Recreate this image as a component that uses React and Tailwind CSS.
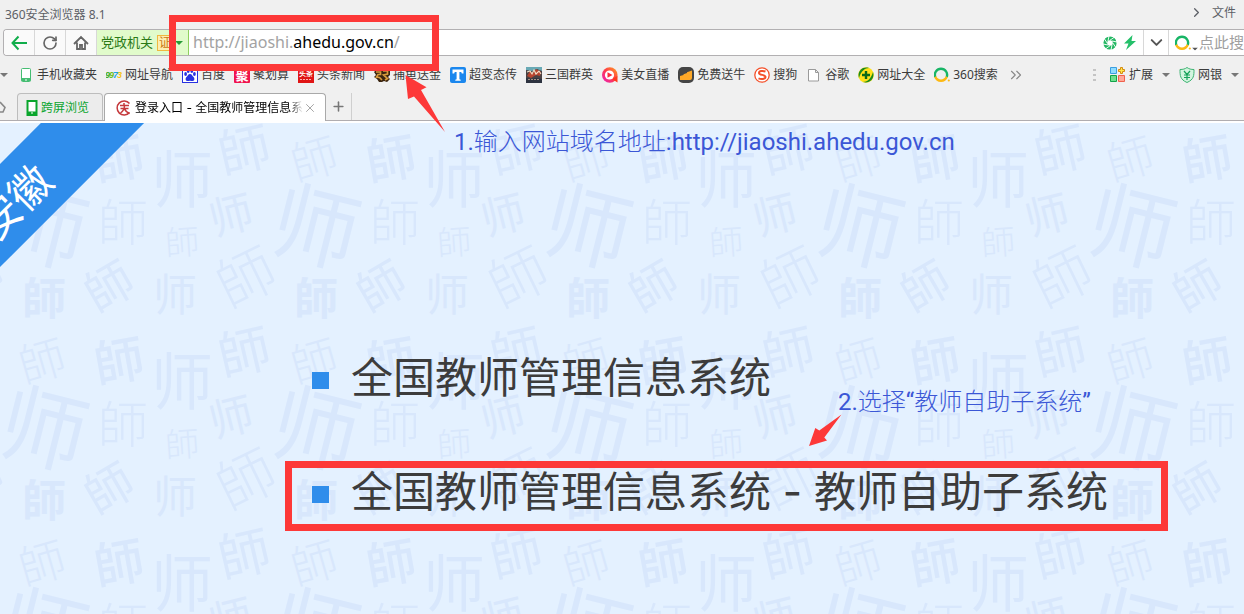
import { useState } from 'react'
import { ArrowLeft, ChevronDown, ChevronRight, ChevronsRight, Plus, RotateCw, X } from 'lucide-react'

const CJK = "font-['Noto_Sans','Noto_Sans_CJK_SC',sans-serif]"

const GLYPHS = [
  { c: '師', x: 42, y: 36, s: 46, r: -16, w: 300 },
  { c: '師', x: 119, y: 36, s: 50, r: -10, w: 500 },
  { c: '师', x: 182, y: 57, s: 62, r: 0, w: 400 },
  { c: '師', x: 244, y: 27, s: 52, r: -13, w: 400 },
  { c: '师', x: 44, y: 104, s: 86, r: 14, w: 400 },
  { c: '師', x: 123, y: 99, s: 50, r: 0, w: 300 },
  { c: '師', x: 182, y: 119, s: 34, r: -4, w: 300 },
  { c: '师', x: 231, y: 92, s: 44, r: -14, w: 400 },
  { c: '師', x: 44, y: 176, s: 44, r: 0, w: 700 },
  { c: '師', x: 109, y: 163, s: 48, r: -30, w: 400 },
  { c: '师', x: 175, y: 172, s: 44, r: 0, w: 400 },
  { c: '師', x: 246, y: 154, s: 58, r: -26, w: 300 },
]

function Backdrop() {
  return (
    <svg aria-hidden="true" className="absolute inset-0 h-full w-full">
      <defs>
        <g id="tile" fill="#d8e7fc" textAnchor="middle" fontFamily="'Noto Sans CJK TC', 'Noto Sans CJK SC', sans-serif">
          {GLYPHS.map((g, i) => (
            <text key={i} fontSize={g.s} fontWeight={g.w} transform={`translate(${g.x} ${g.y}) rotate(${g.r})`} y={g.s * 0.37}>
              {g.c}
            </text>
          ))}
        </g>
      </defs>
      {Array.from({ length: 36 }).map((_, i) => (
        <use key={i} href="#tile" x={((i % 9) - 1) * 272} y={Math.floor(i / 9) * 202} />
      ))}
    </svg>
  )
}

function Caret({ className = '' }) {
  return (
    <svg viewBox="0 0 8 4" className={`h-1 w-2 shrink-0 ${className}`}>
      <path d="M0 0h8L4 4z" fill="currentColor" />
    </svg>
  )
}

function Icon({ children }) {
  return (
    <svg viewBox="0 0 16 16" className="size-4 shrink-0">
      {children}
    </svg>
  )
}

function SearchRing() {
  return (
    <Icon>
      <path d="M1.3 10A6.1 6.1 0 1 1 12.700 10" fill="none" stroke="#18b566" strokeWidth="2.400" />
      <path d="M1.300 9.800a6.100 6.100 0 0 0 11.400 0" fill="none" stroke="#fdb913" strokeWidth="2.400" />
      <circle cx="14.800" cy="13.500" r="1.100" fill="#fdb913" />
    </Icon>
  )
}

const BOOKMARKS = [
  {
    label: '手机收藏夹',
    icon: (
      <Icon>
        <rect x="3.500" y="1.500" width="9" height="13" rx="1" fill="#fff" stroke="#45bd72" />
        <path d="M3.500 12.500h9" stroke="#45bd72" strokeWidth="3" />
        <path d="M7 13h2" stroke="#fff" />
      </Icon>
    ),
  },
  {
    label: '网址导航',
    icon: (
      <Icon>
        <g fontFamily="Liberation Sans" fontSize="9" fontWeight="700" fontStyle="italic">
          <text x="-1" y="11" fill="#3fae2a">9</text>
          <text x="3" y="11" fill="#6cc01c">9</text>
          <text x="7" y="11" fill="#1ba0e8">7</text>
          <text x="11" y="11" fill="#f5c518">3</text>
        </g>
      </Icon>
    ),
  },
  {
    label: '百度',
    icon: (
      <Icon>
        <rect x="0.500" y="0.500" width="15" height="15" fill="#fff" stroke="#2932e1" />
        <g fill="#2932e1">
          <ellipse cx="3.600" cy="7" rx="1.400" ry="1.900" />
          <ellipse cx="6.200" cy="4" rx="1.400" ry="2" />
          <ellipse cx="9.800" cy="4" rx="1.400" ry="2" />
          <ellipse cx="12.400" cy="7" rx="1.400" ry="1.900" />
          <path d="M8 7c2 0 2 1.500 3.500 3s1 4-1 4c-1 0-1.500-.3-2.500-.3s-1.500.3-2.500.3c-2 0-2.500-2.500-1-4S6 7 8 7z" />
        </g>
      </Icon>
    ),
  },
  {
    label: '聚划算',
    icon: (
      <Icon>
        <rect width="16" height="16" rx="1" fill="#f0134d" />
        <text x="8" y="12.500" fontSize="13" fontWeight="700" textAnchor="middle" fill="#fff">聚</text>
      </Icon>
    ),
  },
  {
    label: '头条新闻',
    icon: (
      <Icon>
        <rect width="16" height="16" fill="#e01515" />
        <text x="8" y="9" fontSize="7" fontWeight="700" textAnchor="middle" fill="#fff">头条</text>
        <path d="M2 12.500h12" stroke="#ffb0b0" strokeDasharray="2 1" />
      </Icon>
    ),
  },
  {
    label: '捕鱼送金',
    icon: (
      <Icon>
        <path d="M0 5l3-3h4l2 1 3-2 4 3v4l-2 2 2 2-3 3-3-1-2 1H5L3 12 0 10l2-2z" fill="#3a2410" />
        <path d="M2 5h4.500v2.500H4L2.500 10l3 .5L8 13M9 4h4.500v3L9.500 8l4 3.500L11 13" fill="none" stroke="#d79a3c" strokeWidth="1.700" />
      </Icon>
    ),
  },
  {
    label: '超变态传',
    icon: (
      <Icon>
        <rect width="16" height="16" rx="2" fill="#1b87ee" />
        <path d="M2.500 2.500h11v4h-1.700l-.6-1.600H9.400v7.300l1.300.5v1H5.300v-1l1.300-.5V4.900H4.800l-.6 1.600H2.500z" fill="#fff" />
      </Icon>
    ),
  },
  {
    label: '三国群英',
    icon: (
      <Icon>
        <rect width="16" height="16" fill="#4a4244" />
        <path d="M0 0h16v4L11 2 6 4 0 3z" fill="#69a9b5" />
        <path d="M1 9l3-5 3 2 3-4 5 3-1 4-4-1-5 3z" fill="#b8452f" />
        <path d="M1 5l3-1 2 3 2-4 2 4 3-3 2 3" fill="none" stroke="#f2dfc6" strokeWidth="1.100" />
        <path d="M0 11l5 1 5-1 6 1v4H0z" fill="#2d3340" />
        <path d="M2 12.500h12" stroke="#a89080" strokeDasharray="2 1" />
      </Icon>
    ),
  },
  {
    label: '美女直播',
    icon: (
      <Icon>
        <defs>
          <linearGradient id="live" x1="0" y1="1" x2="1" y2="0">
            <stop offset="0" stopColor="#e81ec4" />
            <stop offset="0.500" stopColor="#ff3a4a" />
            <stop offset="1" stopColor="#ffa51e" />
          </linearGradient>
        </defs>
        <circle cx="7.800" cy="8" r="7.800" fill="url(#live)" />
        <path d="M10 12l5.500 3.500V9z" fill="#ff3a1e" />
        <circle cx="7.500" cy="8" r="4.600" fill="#fff" />
        <path d="M5.500 5.200l5 2.800-5 2.800z" fill="#fb2c3c" />
      </Icon>
    ),
  },
  {
    label: '免费送牛',
    icon: (
      <Icon>
        <rect width="16" height="16" rx="5" fill="#454545" />
        <path d="M2 9l3.500-1v-.8L9 6v-.800L14 3.500V11q0 2-2 2H2z" fill="#ffa827" />
      </Icon>
    ),
  },
  {
    label: '搜狗',
    icon: (
      <Icon>
        <circle cx="8" cy="8" r="7.200" fill="#fff" stroke="#f4502a" strokeWidth="1.300" />
        <path d="M11.500 4.500C9 3.500 5 3.600 5 5.900c0 2.400 6.500 1.600 6.500 4.100 0 2.300-4.500 2.500-7 1.400" fill="none" stroke="#f4502a" strokeWidth="2" />
      </Icon>
    ),
  },
  {
    label: '谷歌',
    icon: (
      <Icon>
        <path d="M2.500 2.500h7l3 3v8.500h-10zM9.500 2.500v3h3" fill="#fff" stroke="#9a9a9a" />
      </Icon>
    ),
  },
  {
    label: '网址大全',
    icon: (
      <Icon>
        <circle cx="8" cy="8" r="7.800" fill="#ffe11a" />
        <path d="M1 11C-1 5 4-1 11 1 7 1 3 4 1 11zM15 5c2 6-3 12-10 10 4 0 8-3 10-10z" fill="#198a1f" />
        <path d="M8 4v8M4 8h8" stroke="#0a6b18" strokeWidth="2.400" />
      </Icon>
    ),
  },
  { label: '360搜索', icon: <SearchRing /> },
]

function TitleBar() {
  return (
    <header className="flex h-[29px] items-center justify-between pl-[5px] pr-2 text-xs text-[#5c5f66]">
      <h1>360安全浏览器 8.1</h1>
      <button className="-mt-1 flex items-center gap-2">
        <ChevronRight size={15} strokeWidth={2} />
        文件
      </button>
    </header>
  )
}

function AddressBar() {
  const [url, setUrl] = useState('http://jiaoshi.ahedu.gov.cn/')
  const [, scheme, host, rest] = url.match(/^(https?:\/\/(?:[^./]+\.)?)?([^/]*)(.*)$/)
  const nav = 'flex h-full w-[31px] items-center justify-center border-r border-[#d8d8d8] bg-[#fafafa]'
  return (
    <div className="ml-[3px] flex h-[27px] items-center overflow-hidden rounded-l-sm border border-r-0 border-[#b2b0b2] bg-white">
      <button aria-label="后退" className={`${nav} text-[#10ad4b]`}>
        <svg viewBox="0 0 16 16" className="size-4" fill="none" stroke="currentColor" strokeWidth="2">
          <path d="M7.500 1.500L1.500 8l6 6.500M1.500 8H16" />
        </svg>
      </button>
      <button aria-label="刷新" className={`${nav} text-[#666]`}>
        <RotateCw size={16} strokeWidth={2.500} />
      </button>
      <button aria-label="主页" className={`${nav} text-[#666]`}>
        <svg viewBox="0 0 16 16" className="size-4" fill="none" stroke="currentColor" strokeWidth="1.800">
          <path d="M1 9l7-7 7 7M4 7.500V14h3v-4h2v4h3V7.500" />
        </svg>
      </button>
      <button className="flex h-full w-[92px] shrink-0 items-center border-r border-[#8fd05f] bg-[#e1fbcb] pl-1 text-[13px] text-[#2b7a17]">
        党政机关
        <span className="ml-1 flex size-4 items-center justify-center border border-[#f0b840] bg-[#fdeeb2] text-xs text-[#c87912]">证</span>
        <Caret className="ml-0.5 text-[#299c38]" />
      </button>
      <div className="relative h-full min-w-0 flex-1 text-base leading-[25px]">
        <input
          aria-label="地址"
          value={url}
          onChange={(e) => setUrl(e.target.value)}
          className="h-full w-full bg-transparent px-1 text-transparent caret-black outline-none"
        />
        <span aria-hidden="true" className="pointer-events-none absolute inset-0 px-1 text-[#a3a3a3]">
          {scheme}
          <span className="text-black">{host}</span>
          {rest}
        </span>
      </div>
      <button aria-label="极速模式" className="px-1">
        <svg viewBox="0 0 14 14" className="size-3.5" fill="none">
          <circle cx="7" cy="7" r="4.700" stroke="#25b864" strokeWidth="3.800" />
          <path
            d="M5 5L6 0M7 4.200L11 1.500M9 5l5 1M9.800 7l2.700 4M9 9l-1 5M7 9.800L3 12.500M5 9L0 8M4.200 7L1.500 3"
            stroke="#fff"
            strokeWidth="0.900"
          />
        </svg>
      </button>
      <button aria-label="加速" className="pl-[3px] pr-[7px] text-[#25c06a]">
        <svg viewBox="0 0 12 15" className="h-[15px] w-3" fill="currentColor">
          <path d="M8.500 0L0 8.500h4.500L2 15l10-9H7.500z" />
        </svg>
      </button>
      <button aria-label="展开" className="flex h-full w-[26px] items-center justify-center border-x border-[#d8d8d8] text-[#555]">
        <ChevronDown size={19} strokeWidth={2.500} />
      </button>
      <button aria-label="搜索引擎" className="flex items-center pl-1.5 text-[#555]">
        <SearchRing />
        <Caret className="mt-3 scale-75" />
      </button>
      <input aria-label="搜索" placeholder="点此搜索" className="w-[45px] text-[15px] outline-none placeholder:text-[#a0a0a0]" />
    </div>
  )
}

function BookmarkBar() {
  return (
    <nav className="flex h-[37px] items-center gap-[9px] pr-[5px] text-xs whitespace-nowrap text-[#3b3b3b]">
      <button aria-label="收藏夹" className="w-[9px] text-[#777]">
        <Caret />
      </button>
      {BOOKMARKS.map((b) => (
        <a key={b.label} href="#" className="flex items-center gap-[3px]">
          {b.icon}
          {b.label}
        </a>
      ))}
      <button aria-label="更多收藏" className="text-[#888]">
        <ChevronsRight size={18} strokeWidth={1.500} />
      </button>
      <div className="ml-auto flex items-center gap-[9px]">
        <svg viewBox="0 0 4 14" className="mr-1 h-3.5 w-1" fill="#c4c4c4">
          <path d="M0 1h3v2H0zM0 6h3v2H0zM0 11h3v2H0z" />
        </svg>
        <button className="flex items-center gap-[3px]">
          <Icon>
            <path d="M.5.500h6v6h-6z" fill="#8fdcff" stroke="#3c9fe0" />
            <path d="M.5 8.500h6v6h-6z" fill="#6fe08e" stroke="#12a34a" />
            <path d="M8.500 8.500h6v6h-6z" fill="#ffa898" stroke="#f0614c" />
            <path d="M10.500.500h2v2h2v2h-2v2h-2v-2h-2v-2h2z" fill="#ffe94a" stroke="#d58a12" />
          </Icon>
          扩展
          <Caret className="ml-1.5 text-[#777]" />
        </button>
        <button className="flex items-center gap-[3px]">
          <Icon>
            <path d="M8 .5c2 1.500 4 2 7 2 0 6 0 10-7 13-7-3-7-7-7-13 3 0 5-.5 7-2z" fill="#d3f5df" stroke="#3cb371" />
            <path d="M5 4l3 3.500L11 4M8 7v6M5 8h6M5 10.500h6" fill="none" stroke="#17a35a" strokeWidth="1.200" />
          </Icon>
          网银
          <Caret className="ml-1.5 text-[#777]" />
        </button>
      </div>
    </nav>
  )
}

function TabStrip() {
  return (
    <div className="flex h-7 items-end border-b border-[#b0adb0] text-xs">
      <button aria-label="主页" className="flex h-full w-[17px] items-center text-[#888]">
        <svg viewBox="0 0 6 12" className="h-3 w-1.5" fill="none" stroke="currentColor" strokeWidth="1.600">
          <path d="M0 1l5 5.500L3 11H0" />
        </svg>
      </button>
      <button className="flex h-[27px] w-[86px] items-center gap-[3px] rounded-t border border-b-0 border-[#bdbdbd] bg-[#ececec] pl-2 pt-0.5 text-[#0aa52c]">
        <svg viewBox="0 0 12 16" className="h-4 w-3 shrink-0">
          <path d="M1.500 1h9v14h-9z" fill="#fff" stroke="#0aa52c" strokeWidth="2" />
          <path d="M1 13h10" stroke="#0aa52c" strokeWidth="3" />
          <path d="M5 13h2" stroke="#fff" />
        </svg>
        跨屏浏览
      </button>
      <div className="relative -mb-px ml-px flex h-7 w-[222px] items-center rounded-t border border-b-0 border-[#a9a9a9] bg-white pl-[11px]">
        <button className="flex items-center gap-[3px] text-black">
          <Icon>
            <path d="M13.500 3.500A7 7 0 1 0 13.500 12.500" fill="none" stroke="#c5393c" strokeWidth="1.500" />
            <path d="M8 3v2.500M4 5.500h9M4.500 8.500h8M8.500 5.500c0 3-1 5.500-4 7.500M8.500 8.500c.5 2 2 3.500 5 5" fill="none" stroke="#c5393c" strokeWidth="1.500" />
          </Icon>
          <span className="mask-r-from-92% font-['Inter','Noto_Sans_CJK_SC',sans-serif] whitespace-nowrap">
            登录入口 - 全国教师管理信息系
          </span>
        </button>
        <button aria-label="关闭标签页" className="ml-auto mr-2 text-[#999]">
          <X size={14} strokeWidth={1.500} />
        </button>
      </div>
      <button aria-label="新建标签页" className="flex h-full w-[26px] items-center justify-center border-r border-[#cfcfcf] text-[#777]">
        <Plus size={15} strokeWidth={2.500} />
      </button>
    </div>
  )
}

const LINKS = ['全国教师管理信息系统', '全国教师管理信息系统 - 教师自助子系统']

function Portal() {
  return (
    <main className="relative flex-1 overflow-hidden border-t-2 border-white bg-[#e4f1ff]">
      <Backdrop />
      <div className="absolute -left-[136px] top-[42px] flex h-[73px] w-[300px] -rotate-45 items-center justify-center bg-[#2f8deb] text-[42px] text-white">
        安徽
      </div>
      <ul className="relative space-y-[50px] pt-[223px] pl-[312px] font-['Inter','Noto_Sans_CJK_SC',sans-serif] text-[42px] leading-16 text-[#3c3c3c]">
        {LINKS.map((text) => (
          <li key={text} className="flex items-center gap-[22px]">
            <span className="mt-1 size-[17px] shrink-0 bg-[#2f8deb]" />
            <a href="#" className="whitespace-nowrap">{text}</a>
          </li>
        ))}
      </ul>
    </main>
  )
}

function Annotations() {
  return (
    <div className="pointer-events-none absolute inset-0 overflow-hidden font-['Roboto','Noto_Sans_CJK_SC',sans-serif] text-2xl leading-8 text-[#3b57d6]">
      <div className="absolute left-[169px] top-[15px] h-14 w-[270px] border-7 border-[#fd3838]" />
      <div className="absolute left-[285px] top-[461px] h-[70px] w-[883px] border-7 border-[#fd3838]" />
      <svg className="absolute inset-0 h-full w-full" fill="#fd3838">
        <path d="M405.500 75l21 12.300-5.500 2.700L445 132l-31-35.500-6 2.500z" />
        <path d="M809 446l6.300-18 4 2.500L841.500 414.500 824.300 437.500l2.700 3z" />
      </svg>
      <p className="absolute left-[454px] top-[126px] whitespace-nowrap">
        1.<span className="font-light">输入网站域名地址</span>:http://jiaoshi.ahedu.gov.cn
      </p>
      <p className="absolute left-[838px] top-[386px] whitespace-nowrap">
        2.<span className="font-light">选择</span>“<span className="font-light">教师自助子系统</span>”
      </p>
    </div>
  )
}

export default function App() {
  return (
    <div lang="zh-CN" className={`relative flex min-h-screen flex-col overflow-hidden bg-[#f0f0f0] ${CJK}`}>
      <TitleBar />
      <AddressBar />
      <BookmarkBar />
      <TabStrip />
      <Portal />
      <Annotations />
    </div>
  )
}
